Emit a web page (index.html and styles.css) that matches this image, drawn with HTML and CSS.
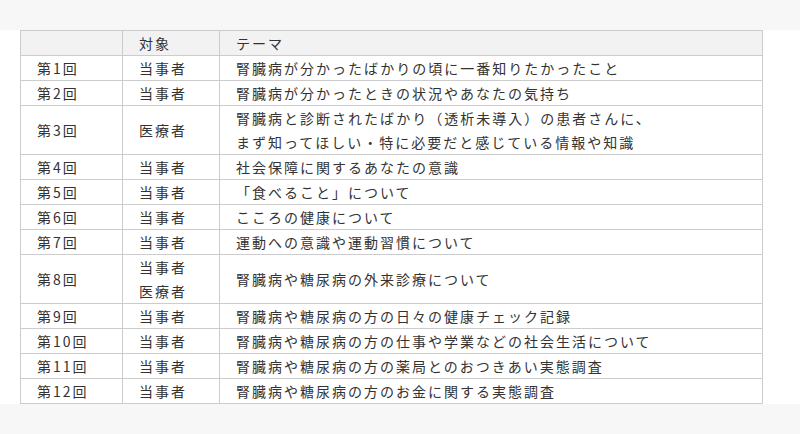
FILE: index.html
```html
<!DOCTYPE html>
<html lang="ja">
<head>
<meta charset="utf-8">
<link rel="stylesheet" href="styles.css">
</head>
<body>
<div class="band"></div>
<section class="content">
<table class="schedule">
<colgroup><col class="c1"><col class="c2"><col class="c3"></colgroup>
<thead>
<tr><th></th><th>対象</th><th>テーマ</th></tr>
</thead>
<tbody>
<tr><td>第1回</td><td>当事者</td><td>腎臓病が分かったばかりの頃に一番知りたかったこと</td></tr>
<tr><td>第2回</td><td>当事者</td><td>腎臓病が分かったときの状況やあなたの気持ち</td></tr>
<tr><td>第3回</td><td>医療者</td><td>腎臓病と診断されたばかり（透析未導入）の患者さんに、<br>まず知ってほしい・特に必要だと感じている情報や知識</td></tr>
<tr><td>第4回</td><td>当事者</td><td>社会保障に関するあなたの意識</td></tr>
<tr><td>第5回</td><td>当事者</td><td>「食べること」について</td></tr>
<tr><td>第6回</td><td>当事者</td><td>こころの健康について</td></tr>
<tr><td>第7回</td><td>当事者</td><td>運動への意識や運動習慣について</td></tr>
<tr><td>第8回</td><td>当事者<br>医療者</td><td>腎臓病や糖尿病の外来診療について</td></tr>
<tr><td>第9回</td><td>当事者</td><td>腎臓病や糖尿病の方の日々の健康チェック記録</td></tr>
<tr><td>第10回</td><td>当事者</td><td>腎臓病や糖尿病の方の仕事や学業などの社会生活について</td></tr>
<tr><td>第11回</td><td>当事者</td><td>腎臓病や糖尿病の方の薬局とのおつきあい実態調査</td></tr>
<tr><td>第12回</td><td>当事者</td><td>腎臓病や糖尿病の方のお金に関する実態調査</td></tr>
</tbody>
</table>
</section>
<div class="band"></div>
</body>
</html>
```

FILE: styles.css
```css
html, body {
  margin: 0;
  padding: 0;
}
body {
  background: #f7f7f7;
  font-family: "Noto Sans CJK JP", "Noto Sans", sans-serif;
  color: #333;
}
.band {
  height: 30px;
}
.content {
  background: #fff;
  padding: 0 20px;
}
.schedule {
  border-collapse: collapse;
  table-layout: fixed;
  width: 742px;
  font-size: 14px;
  letter-spacing: 2px;
}
.c1 { width: 102px; }
.c2 { width: 97px; }
.c3 { width: 543px; }
.schedule th,
.schedule td {
  border: 1px solid #ccc;
  padding: 0 16px;
  line-height: 24px;
  height: 24px;
  text-align: left;
  vertical-align: middle;
  font-weight: normal;
  white-space: nowrap;
}
.schedule th {
  background: #f2f2f2;
}
```
